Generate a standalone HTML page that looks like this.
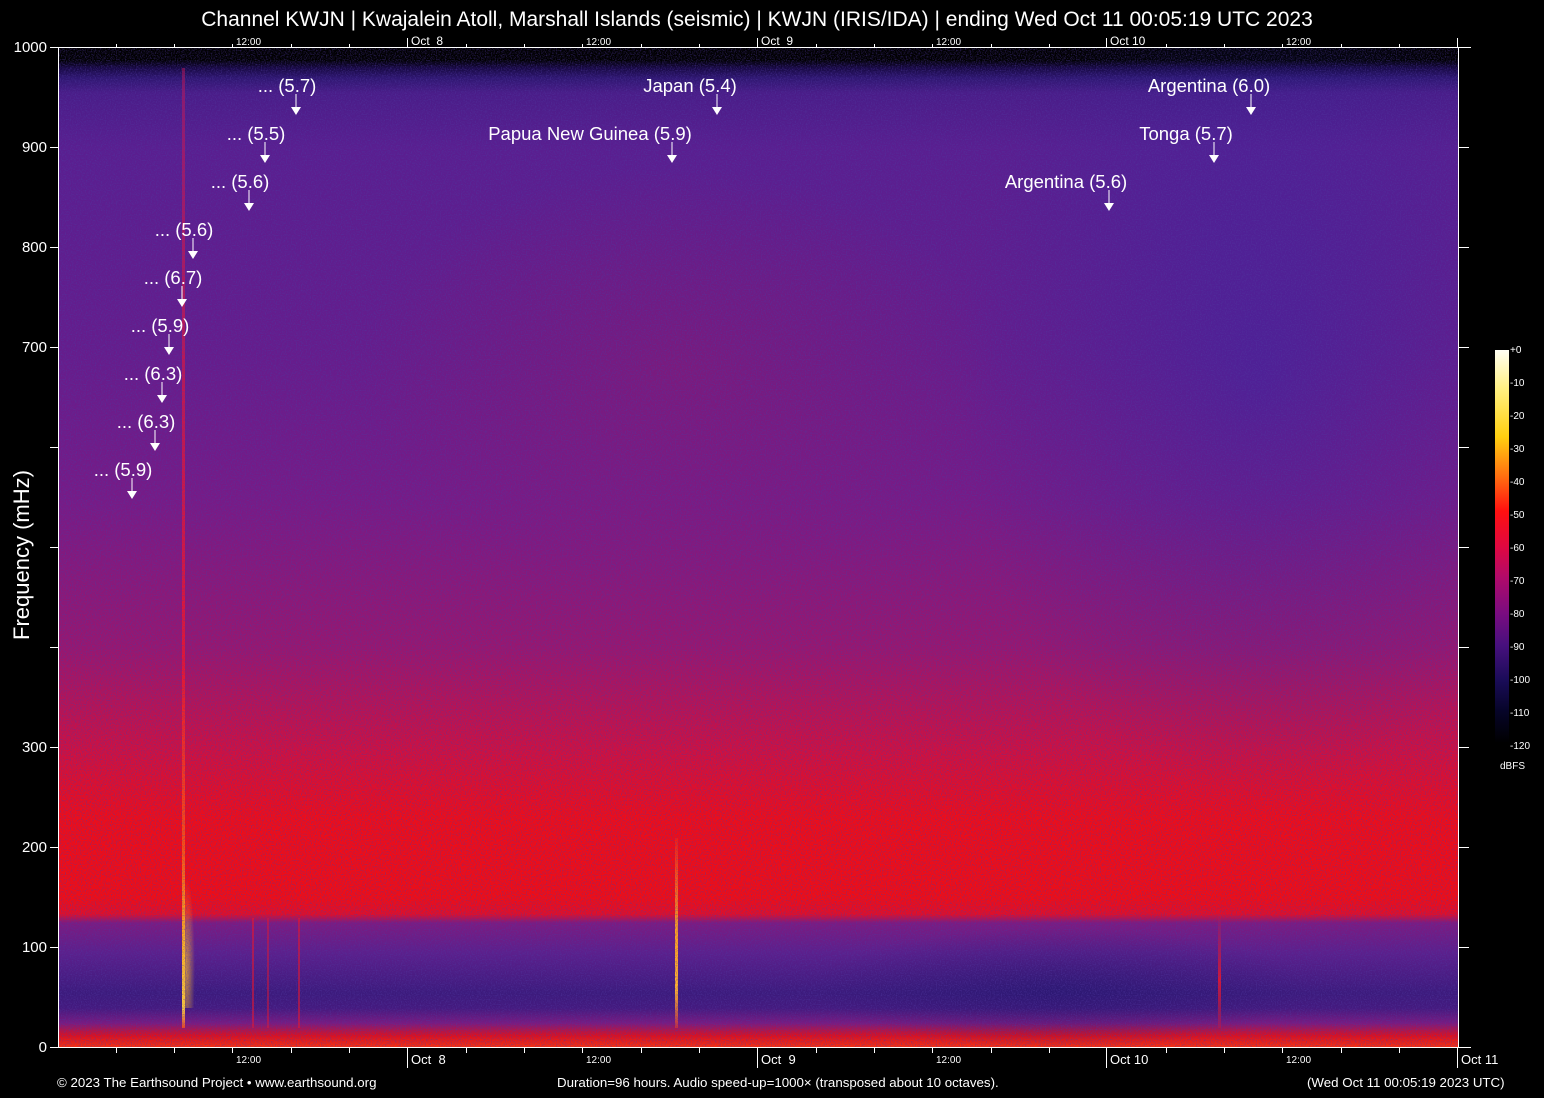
<!DOCTYPE html>
<html><head><meta charset="utf-8">
<style>
html,body{margin:0;padding:0;background:#000;width:1544px;height:1098px;overflow:hidden;font-family:"Liberation Sans",sans-serif;color:#fff}
.abs{position:absolute}
#spec{position:absolute;left:59px;top:48px;width:1399px;height:999px;overflow:hidden;
background:linear-gradient(to bottom,#000 0px,#000 12px,#160840 20px,#2e1670 30px,#4a1c88 45px,#5a1e90 100px,#661c8c 300px,#781a86 450px,#9a166e 600px,#d01040 700px,#f20c16 770px,#f40c12 850px,#e40e26 866px,#7e1a80 875px,#5c1f8c 905px,#3c1a7c 945px,#44197e 960px,#7a1a80 975px,#e0101c 988px,#f83010 999px);}
.ov{position:absolute;left:0;top:0;width:100%;height:100%}
.lbl{position:absolute;font-size:18.5px;white-space:nowrap;transform:translateX(-50%)}
.yl{position:absolute;right:1497px;font-size:15px;text-align:right}
.tk{position:absolute;background:#fff}
.cbl{position:absolute;left:1510px;font-size:10px}
</style></head><body>
<div class="abs" style="left:0;top:8px;width:1514px;text-align:center;font-size:21px">Channel KWJN | Kwajalein Atoll, Marshall Islands (seismic) | KWJN (IRIS/IDA) | ending Wed Oct 11 00:05:19 UTC 2023</div>

<div id="spec">
 <div class="ov" style="background:radial-gradient(ellipse 300px 420px at 1200px 330px,rgba(30,40,170,0.35),rgba(30,40,170,0) 100%)"></div>
 <div class="ov" style="background:radial-gradient(ellipse 320px 200px at 620px 320px,rgba(170,20,90,0.3),rgba(170,20,90,0) 100%)"></div>
 <div class="ov" style="background:radial-gradient(ellipse 250px 60px at 1000px 940px,rgba(20,20,100,0.4),rgba(20,20,100,0) 100%)"></div>
 <div class="abs" style="left:123px;top:20px;width:3px;height:960px;background:linear-gradient(to bottom,rgba(220,20,80,.45),rgba(245,20,40,.85) 600px,#ff5010 780px,#ffb020 880px,#ffd040 940px,rgba(255,80,20,.8))"></div>
 <div class="abs" style="left:124px;top:830px;width:12px;height:130px;background:radial-gradient(ellipse at 30% 70%,rgba(255,190,40,.7),rgba(255,60,20,0) 70%)"></div>
 <div class="abs" style="left:616px;top:790px;width:3px;height:190px;background:linear-gradient(to bottom,rgba(255,60,20,.3),#ffa020 50%,#ffb030 80%,rgba(255,60,20,.5))"></div>
 <div class="abs" style="left:1159px;top:860px;width:3px;height:120px;background:linear-gradient(to bottom,rgba(230,20,40,0),rgba(240,20,40,.9) 60%,rgba(230,20,40,.3))"></div>
 <div class="abs" style="left:193px;top:870px;width:2px;height:110px;background:rgba(240,20,40,.6)"></div>
 <div class="abs" style="left:208px;top:870px;width:2px;height:110px;background:rgba(240,20,40,.5)"></div>
 <div class="abs" style="left:239px;top:870px;width:2px;height:110px;background:rgba(240,20,40,.6)"></div>
 <svg class="ov" width="1399" height="999" style="opacity:.5">
  <filter id="n" x="0" y="0" width="100%" height="100%"><feTurbulence type="fractalNoise" baseFrequency="0.8" numOctaves="1" seed="3"/>
   <feColorMatrix type="matrix" values="0 0 0 0 0.08  0 0 0 0 0.04  0 0 0 0 0.35  3 0 0 0 -1.3"/></filter>
  <rect width="1399" height="999" filter="url(#n)"/>
 </svg>
</div>

<div class="tk" style="left:58px;top:47px;width:1413px;height:1px"></div>
<div class="tk" style="left:58px;top:1047px;width:1413px;height:1px"></div>
<div class="tk" style="left:58px;top:47px;width:1px;height:1001px"></div>
<div class="tk" style="left:1458px;top:47px;width:1px;height:1001px"></div>

<div id="yt"></div>
<script>
var g='';for(var i=0;i<=10;i++){var y=47+i*100;g+='<div class="tk" style="left:50px;top:'+y+'px;width:8px;height:1px"></div>';if(i>0&&i<10)g+='<div class="tk" style="left:1459px;top:'+y+'px;width:10px;height:1px"></div>';}
document.getElementById('yt').innerHTML=g;
</script>

<div class="yl" style="top:39px">1000</div>
<div class="yl" style="top:139px">900</div>
<div class="yl" style="top:239px">800</div>
<div class="yl" style="top:339px">700</div>
<div class="yl" style="top:739px">300</div>
<div class="yl" style="top:839px">200</div>
<div class="yl" style="top:939px">100</div>
<div class="yl" style="top:1039px">0</div>
<div class="abs" style="left:22px;top:555px;transform:translate(-50%,-50%) rotate(-90deg);font-size:22px;white-space:nowrap">Frequency (mHz)</div>

<div id="xt"></div>
<script>
var h='';var xs=[115.7,174,232.3,290.7,349,465.7,524,582.3,640.7,699,815.7,874,932.3,990.7,1049,1165.7,1224,1282.3,1340.7,1399];
xs.forEach(function(x){h+='<div class="tk" style="left:'+Math.round(x)+'px;top:44px;width:1px;height:4px"></div><div class="tk" style="left:'+Math.round(x)+'px;top:1047px;width:1px;height:6px"></div>';});
[407,757,1106,1457].forEach(function(x){h+='<div class="tk" style="left:'+x+'px;top:38px;width:1px;height:10px"></div><div class="tk" style="left:'+x+'px;top:1047px;width:1px;height:21px"></div>';});
document.getElementById('xt').innerHTML=h;
</script>
<div class="abs" style="left:236px;top:37px;font-size:10px">12:00</div>
<div class="abs" style="left:586px;top:37px;font-size:10px">12:00</div>
<div class="abs" style="left:936px;top:37px;font-size:10px">12:00</div>
<div class="abs" style="left:1286px;top:37px;font-size:10px">12:00</div>
<div class="abs" style="left:411px;top:34px;font-size:12px">Oct&nbsp; 8</div>
<div class="abs" style="left:761px;top:34px;font-size:12px">Oct&nbsp; 9</div>
<div class="abs" style="left:1110px;top:34px;font-size:12px">Oct 10</div>
<div class="abs" style="left:236px;top:1055px;font-size:10px">12:00</div>
<div class="abs" style="left:586px;top:1055px;font-size:10px">12:00</div>
<div class="abs" style="left:936px;top:1055px;font-size:10px">12:00</div>
<div class="abs" style="left:1286px;top:1055px;font-size:10px">12:00</div>
<div class="abs" style="left:411px;top:1052px;font-size:13px">Oct&nbsp; 8</div>
<div class="abs" style="left:761px;top:1052px;font-size:13px">Oct&nbsp; 9</div>
<div class="abs" style="left:1110px;top:1052px;font-size:13px">Oct 10</div>
<div class="abs" style="left:1461px;top:1052px;font-size:13px">Oct 11</div>

<div id="ann"></div>
<script>
var a=[["... (5.7)",287,86,296],["... (5.5)",256,134,265],["... (5.6)",240,182,249],["... (5.6)",184,230,193],["... (6.7)",173,278,182],["... (5.9)",160,326,169],["... (6.3)",153,374,162],["... (6.3)",146,422,155],["... (5.9)",123,470,132],["Japan (5.4)",690,86,717],["Papua New Guinea (5.9)",590,134,672],["Argentina (6.0)",1209,86,1251],["Tonga (5.7)",1186,134,1214],["Argentina (5.6)",1066,182,1109]];
var s='';a.forEach(function(e){var y=e[2];s+='<div class="lbl" style="left:'+e[1]+'px;top:'+(y-11)+'px">'+e[0]+'</div>';
s+='<svg class="abs" style="left:'+(e[3]-6)+'px;top:'+(y+8)+'px" width="12" height="22"><line x1="6" y1="0" x2="6" y2="14" stroke="#fff" stroke-width="1"/><polygon points="1,13 11,13 6,21" fill="#fff"/></svg>';});
document.getElementById('ann').innerHTML=s;
</script>

<div class="abs" style="left:1495px;top:350px;width:14px;height:393px;background:linear-gradient(to bottom,#fffff4 0%,#fff080 10%,#ffd010 22%,#ff7010 32%,#ff1010 41%,#e00840 50%,#b00a6a 58%,#7a0c80 67%,#48107e 75%,#1a0c58 84%,#060428 92%,#000 100%)"></div>
<div class="cbl" style="top:345px">+0</div>
<div class="cbl" style="top:378px">-10</div>
<div class="cbl" style="top:411px">-20</div>
<div class="cbl" style="top:444px">-30</div>
<div class="cbl" style="top:477px">-40</div>
<div class="cbl" style="top:510px">-50</div>
<div class="cbl" style="top:543px">-60</div>
<div class="cbl" style="top:576px">-70</div>
<div class="cbl" style="top:609px">-80</div>
<div class="cbl" style="top:642px">-90</div>
<div class="cbl" style="top:675px">-100</div>
<div class="cbl" style="top:708px">-110</div>
<div class="cbl" style="top:741px">-120</div>
<div class="abs" style="left:1500px;top:761px;font-size:10px">dBFS</div>

<div class="abs" style="left:57px;top:1075px;font-size:13.3px">© 2023 The Earthsound Project • www.earthsound.org</div>
<div class="abs" style="left:557px;top:1075px;font-size:13.3px">Duration=96 hours. Audio speed-up=1000× (transposed about 10 octaves).</div>
<div class="abs" style="left:1307px;top:1075px;font-size:13.3px">(Wed Oct 11 00:05:19 2023 UTC)</div>
</body></html>
